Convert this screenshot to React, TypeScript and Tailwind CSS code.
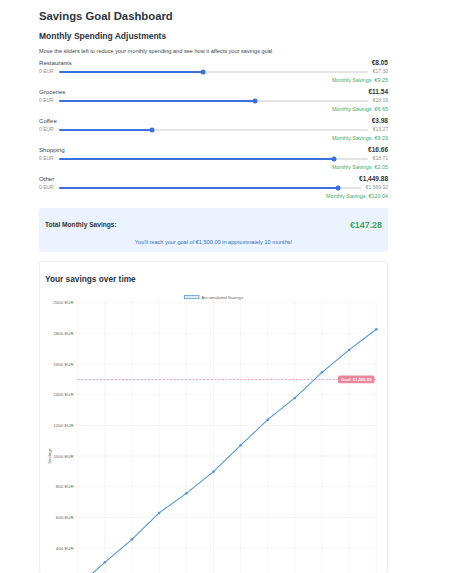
import React from "react";

type Cat = { name: string; value: number; max: number; valLabel: string; maxLabel: string; save: string };

const cats: Cat[] = [
  { name: "Restaurants", value: 8.05, max: 17.3, valLabel: "€8.05", maxLabel: "€17.30", save: "€9.25" },
  { name: "Groceries", value: 11.54, max: 18.19, valLabel: "€11.54", maxLabel: "€18.19", save: "€6.65" },
  { name: "Coffee", value: 3.98, max: 13.27, valLabel: "€3.98", maxLabel: "€13.27", save: "€9.29" },
  { name: "Shopping", value: 16.66, max: 18.71, valLabel: "€16.66", maxLabel: "€18.71", save: "€2.05" },
  { name: "Other", value: 1449.88, max: 1569.92, valLabel: "€1,449.88", maxLabel: "€1,569.92", save: "€120.04" },
];

const data = [150, 307, 457, 629, 757, 898, 1070, 1237, 1379, 1546, 1692, 1827];
const yOf = (v: number) => 302.7 + (2000 - v) * 0.15335;
const xOf = (i: number) => 77.7 + i * 27.145;

function Slider({ c }: { c: Cat }) {
  const pct = (c.value / c.max) * 100;
  return (
    <div className="h-[29px]">
      <div className="flex h-[9px] items-center justify-between">
        <span className="text-[6.1px] leading-none text-[#3b3f45]">{c.name}</span>
        <span className="text-[6.5px] font-bold leading-none text-[#2f3338]">{c.valLabel}</span>
      </div>
      <div className="flex h-[8.5px] items-center">
        <span className="mr-[5.5px] text-[5px] leading-none text-[#8d8f93]">0 EUR</span>
        <div className="relative h-[2px] flex-1 rounded-full bg-[#e4e4e6]">
          <div className="h-full rounded-full bg-[#3b71de]" style={{ width: `${pct}%` }} />
          <div
            className="absolute top-1/2 h-[5px] w-[5px] -translate-x-1/2 -translate-y-1/2 rounded-full bg-[#3b71de]"
            style={{ left: `${pct}%` }}
          />
        </div>
        <span className="ml-[5px] text-[5px] leading-none text-[#8d8f93]">{c.maxLabel}</span>
      </div>
      <div className="flex h-[8.5px] items-center justify-end text-[5.4px] leading-none text-[#45a862]">
        Monthly Savings: {c.save}
      </div>
    </div>
  );
}

function Chart() {
  const grid = [2000, 1800, 1600, 1400, 1200, 1000, 800, 600, 400, 200, 0];
  const labels = [2000, 1800, 1600, 1400, 1200, 1000, 800, 600, 400];
  const pts = data.map((v, i) => `${xOf(i).toFixed(2)},${yOf(v).toFixed(2)}`).join(" ");
  const font = "'Liberation Sans', Arial, sans-serif";
  return (
    <svg width={337} height={283} viewBox="45 290 337 283" className="block">
      <rect x={184.3} y={295.4} width={14.7} height={3.3} fill="rgba(74,143,212,0.18)" stroke="#4a8fd4" strokeWidth={0.7} />
      <text x={201.2} y={298.6} fontSize={4.4} fill="#666" fontFamily={font}>
        Accumulated Savings
      </text>
      {grid.map((v) => (
        <line key={"h" + v} x1={75} x2={376.3} y1={yOf(v)} y2={yOf(v)} stroke="#ebebeb" strokeWidth={0.5} />
      ))}
      {data.map((_, i) => (
        <line key={"v" + i} x1={xOf(i)} x2={xOf(i)} y1={302.7} y2={612} stroke="#ebebeb" strokeWidth={0.5} />
      ))}
      {labels.map((v) => (
        <text key={"t" + v} x={73.7} y={yOf(v) + 1.55} fontSize={4.4} fill="#666" textAnchor="end" fontFamily={font}>
          {v} EUR
        </text>
      ))}
      <text
        x={50.5}
        y={456}
        fontSize={4.4}
        fill="#666"
        textAnchor="middle"
        fontFamily={font}
        transform="rotate(-90 50.5 456)"
      >
        Savings
      </text>
      <line x1={77.7} x2={376.3} y1={379.4} y2={379.4} stroke="#ef7f98" strokeWidth={0.8} strokeDasharray="1.9 1.8" />
      <polyline points={pts} fill="none" stroke="#5193d4" strokeWidth={1.05} />
      {data.map((v, i) => (
        <circle key={"c" + i} cx={xOf(i)} cy={yOf(v)} r={1.3} fill="#5193d4" />
      ))}
      <rect x={338} y={375.5} width={36.5} height={7.8} rx={1.8} fill="#e9869b" />
      <text x={356.25} y={380.9} fontSize={4.2} fontWeight="bold" fill="#fff" textAnchor="middle" fontFamily={font}>
        Goal: €1,500.00
      </text>
    </svg>
  );
}

export default function App() {
  return (
    <div className="h-[573px] w-[470px] overflow-hidden bg-white font-['Liberation_Sans',Arial,sans-serif]">
      <div className="w-[388px] pl-[39px] pt-[8.5px]">
        <h1 className="h-[14px] text-[11.3px] font-bold leading-[14px] text-[#2d3440]">Savings Goal Dashboard</h1>
        <h2 className="mt-[8px] h-[10px] text-[8.5px] font-bold leading-[10px] text-[#2d3440]">
          Monthly Spending Adjustments
        </h2>
        <p className="mt-[6.5px] h-[8px] text-[5.6px] leading-[8px] text-[#3b3f45]">
          Move the sliders left to reduce your monthly spending and see how it affects your savings goal.
        </p>
        <div className="mt-[3.5px]">
          {cats.map((c) => (
            <Slider key={c.name} c={c} />
          ))}
        </div>
        <div className="mt-[4px] h-[44.4px] rounded-[3px] bg-[#ebf4fe] px-[6px] pt-[11.7px]">
          <div className="flex h-[12px] items-center justify-between">
            <span className="text-[6.6px] font-bold leading-none text-[#2f3338]">Total Monthly Savings:</span>
            <span className="text-[8.9px] font-bold leading-none text-[#3ea35c]">€147.28</span>
          </div>
          <div className="mt-[8.6px] flex h-[7px] items-center justify-center text-[5.6px] leading-none text-[#2f6db8]">
            You'll reach your goal of €1,500.00 in approximately 10 months!
          </div>
        </div>
        <div className="mt-[9px] rounded-[3px] border border-[#efefef] bg-white px-[5px] pt-[12.6px] shadow-[0_1px_2px_rgba(0,0,0,0.04)]">
          <h3 className="h-[10px] text-[8.3px] font-bold leading-[10px] text-[#2d3440]">Your savings over time</h3>
          <div className="mt-[5.7px]">
            <Chart />
          </div>
        </div>
      </div>
    </div>
  );
}
